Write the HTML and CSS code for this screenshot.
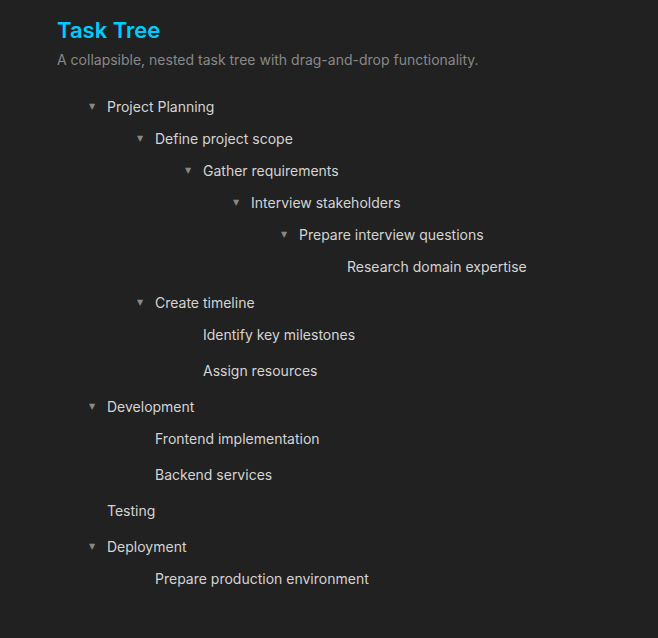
FILE: index.html
```html
<!DOCTYPE html>
<html lang="en">
<head>
<meta charset="utf-8">
<title>Task Tree</title>
<link rel="stylesheet" href="styles.css">
</head>
<body>
<main class="page">
  <h1 class="title">Task Tree</h1>
  <p class="subtitle">A collapsible, nested task tree with drag-and-drop functionality.</p>
  <ul class="tree">
    <li><details open><summary>Project Planning</summary>
      <ul>
        <li><details open><summary>Define project scope</summary>
          <ul>
            <li><details open><summary>Gather requirements</summary>
              <ul>
                <li><details open><summary>Interview stakeholders</summary>
                  <ul>
                    <li><details open><summary>Prepare interview questions</summary>
                      <ul>
                        <li><div class="leaf">Research domain expertise</div></li>
                      </ul>
                    </details></li>
                  </ul>
                </details></li>
              </ul>
            </details></li>
          </ul>
        </details></li>
        <li><details open><summary>Create timeline</summary>
          <ul>
            <li><div class="leaf">Identify key milestones</div></li>
            <li><div class="leaf">Assign resources</div></li>
          </ul>
        </details></li>
      </ul>
    </details></li>
    <li><details open><summary>Development</summary>
      <ul>
        <li><div class="leaf">Frontend implementation</div></li>
        <li><div class="leaf">Backend services</div></li>
      </ul>
    </details></li>
    <li><div class="leaf">Testing</div></li>
    <li><details open><summary>Deployment</summary>
      <ul>
        <li><div class="leaf">Prepare production environment</div></li>
      </ul>
    </details></li>
  </ul>
</main>
</body>
</html>
```
FILE: styles.css
```css
*,
*::before {
  box-sizing: border-box;
}

body {
  margin: 0;
  min-height: 100vh;
  background: #212121;
  color: #d4d4d4;
  font-family: Inter, "Liberation Sans", sans-serif;
  font-size: 14px;
  line-height: 20px;
}

.page {
  padding: 16px 57px 32px;
}

.title {
  margin: 0;
  color: #00ccff;
  font-size: 22px;
  line-height: 28px;
  font-weight: 600;
}

.subtitle {
  margin: 6px 0 21px;
  color: #888;
}

ul {
  margin: 0;
  padding: 0 0 0 48px;
  list-style: none;
}

.tree {
  padding-left: 26px;
}

li {
  margin: 0 0 4px;
}

summary,
.leaf {
  display: flex;
  align-items: center;
  padding: 6px 0;
}

summary {
  list-style: none;
  cursor: pointer;
}

summary::before,
.leaf::before {
  content: "";
  flex: none;
  width: 24px;
}

summary::before {
  content: "▼";
  padding-left: 6px;
  color: #888;
  font-family: "DejaVu Sans", sans-serif;
  font-size: 8px;
}
```
